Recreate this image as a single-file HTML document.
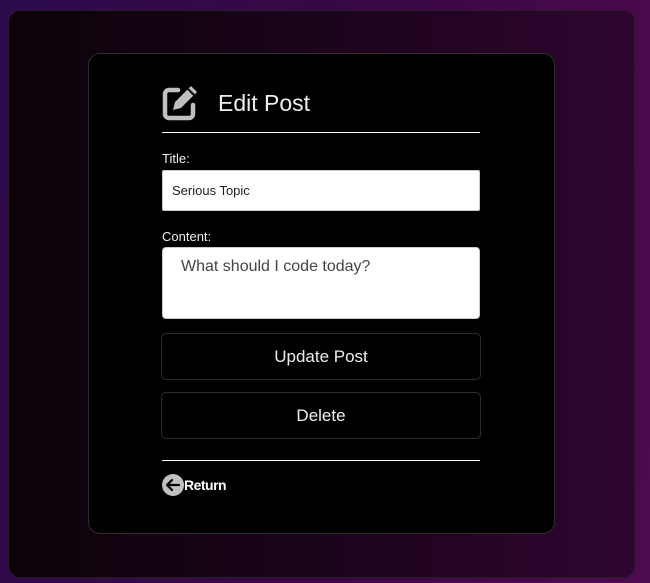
<!DOCTYPE html>
<html><head><style>
*{margin:0;padding:0;box-sizing:border-box}
body{width:650px;height:583px;overflow:hidden;background:linear-gradient(100deg,#2c0b4c 0%,#3a0845 50%,#4e0a4e 100%);font-family:"Liberation Sans",sans-serif;position:relative}
.outer{position:absolute;left:8px;top:10px;width:627px;height:568px;border-radius:12px;border:1px solid #2a1a2a;background:linear-gradient(90deg,#0b0309 0%,#1a0419 45%,#2e0530 100%)}
.card{position:absolute;left:88px;top:53px;width:467px;height:481px;background:#000;border:1px solid #2e2e2e;border-radius:12px}
.abs{position:absolute}
.lbl{color:#f0f0f0;font-size:13px}
.inp{background:#fff;border:1px solid #ccc;border-radius:2px}
.btn{position:absolute;left:161px;width:320px;border:1px solid #2e2e2e;border-radius:5px;color:#eee;font-size:17px;text-align:center}
</style></head><body>
<div class="outer"></div>
<div class="card"></div>
<svg class="abs" style="left:161px;top:84px" width="38" height="38" viewBox="0 0 38 38">
<path d="M17 6H8a4 4 0 0 0-4 4v20a4 4 0 0 0 4 4h20a4 4 0 0 0 4-4v-9" fill="none" stroke="#c0c0c0" stroke-width="4.5" stroke-linecap="round"/>
<path d="M30 2l6 6-16 16-8 2 2-8z" fill="#c0c0c0"/>
<path d="M27 5l6 6" stroke="#000" stroke-width="2"/>
</svg>
<div class="abs" style="left:218px;top:90px;color:#eee;font-size:23px">Edit Post</div>
<div class="abs" style="left:162px;top:132px;width:318px;height:1px;background:#fff"></div>
<div class="abs lbl" style="left:162px;top:151px">Title:</div>
<div class="abs inp" style="left:162px;top:170px;width:318px;height:41px"></div>
<div class="abs" style="left:172px;top:183px;font-size:13px;color:#222">Serious Topic</div>
<div class="abs lbl" style="left:162px;top:229px">Content:</div>
<div class="abs inp" style="left:162px;top:247px;width:318px;height:72px;border-radius:4px"></div>
<div class="abs" style="left:181px;top:258px;font-size:16px;color:#444">What should I code today?</div>
<div class="btn" style="top:333px;height:47px;line-height:45px">Update Post</div>
<div class="btn" style="top:392px;height:47px;line-height:45px">Delete</div>
<div class="abs" style="left:162px;top:460px;width:318px;height:1px;background:#fff"></div>
<svg class="abs" style="left:162px;top:474px" width="22" height="22" viewBox="0 0 22 22">
<circle cx="11" cy="11" r="11" fill="#c0c0c0"/>
<path d="M17 11H6M10 6l-5 5 5 5" fill="none" stroke="#000" stroke-width="2.2" stroke-linecap="round" stroke-linejoin="round"/>
</svg>
<div class="abs" style="left:184px;top:477px;color:#fff;font-size:14px;font-weight:bold;letter-spacing:-0.5px">Return</div>
</body></html>
